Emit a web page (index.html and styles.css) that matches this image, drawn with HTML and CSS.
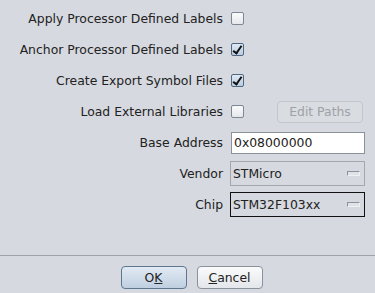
FILE: index.html
```html
<!DOCTYPE html>
<html lang="en">
<head>
<meta charset="UTF-8">
<meta name="viewport" content="width=device-width, initial-scale=1.0">
<title>Processor Options</title>
<link rel="stylesheet" href="styles.css">
</head>
<body>
<div class="dialog">
    <form class="options">
        <label class="field-label" for="applyLabels">Apply Processor Defined Labels</label>
        <div class="control"><input type="checkbox" id="applyLabels" class="check"></div>

        <label class="field-label" for="anchorLabels">Anchor Processor Defined Labels</label>
        <div class="control"><input type="checkbox" id="anchorLabels" class="check" checked></div>

        <label class="field-label" for="exportSymbols">Create Export Symbol Files</label>
        <div class="control"><input type="checkbox" id="exportSymbols" class="check" checked></div>

        <label class="field-label" for="externalLibs">Load External Libraries</label>
        <div class="control control-split">
            <input type="checkbox" id="externalLibs" class="check">
            <button type="button" class="btn btn-disabled" disabled>Edit Paths</button>
        </div>

        <label class="field-label" for="baseAddress">Base Address</label>
        <div class="control"><input type="text" id="baseAddress" class="text-field" value="0x08000000"></div>

        <label class="field-label" for="vendor">Vendor</label>
        <div class="control">
            <div class="combo" id="vendor">
                <span>STMicro</span>
                <span class="combo-arrow"></span>
            </div>
        </div>

        <label class="field-label" for="chip">Chip</label>
        <div class="control">
            <div class="combo combo-focus" id="chip">
                <span>STM32F103xx</span>
                <span class="combo-arrow"></span>
            </div>
        </div>
    </form>

    <div class="footer">
        <button type="button" class="btn btn-default">O<u>K</u></button>
        <button type="button" class="btn"><u>C</u>ancel</button>
    </div>
</div>
</body>
</html>
```

FILE: styles.css
```css
body {
    margin: 0;
    padding: 0;
    background-color: #d6d9df;
    font-family: 'DejaVu Sans', sans-serif;
    font-size: 12.4px;
    color: #222;
}
.dialog {
    height: 293px;
    display: flex;
    flex-direction: column;
}
.options {
    flex: 1;
    display: grid;
    grid-template-columns: 1fr 135px;
    grid-auto-rows: 31px;
    column-gap: 7px;
    align-items: center;
    padding: 3px 10px 0 10px;
}
.field-label {
    text-align: right;
}
.control {
    display: flex;
    align-items: center;
}
.control-split {
    justify-content: space-between;
}
.check {
    appearance: none;
    -webkit-appearance: none;
    width: 13px;
    height: 13px;
    margin: 0 0 0 1px;
    border: 1px solid #7d8894;
    border-radius: 2px;
    background: linear-gradient(#fbfbfc, #e4e7eb);
    box-sizing: border-box;
    position: relative;
}
.check:checked {
    border-color: #50677f;
    background: linear-gradient(#dfe9f4, #b9cde1);
}
.check:checked::after {
    content: "";
    position: absolute;
    left: 3px;
    top: 0px;
    width: 3px;
    height: 8px;
    border: solid #111;
    border-width: 0 2px 2px 0;
    transform: rotate(35deg);
}
.btn {
    font-family: 'DejaVu Sans', sans-serif;
    font-size: 12.4px;
    color: #222;
    height: 22px;
    padding: 0 8px;
    border: 1px solid #8a929b;
    border-radius: 4px;
    background: linear-gradient(#fbfbfc, #e3e6ea);
}
.btn-disabled {
    width: 86px;
    margin-right: 2px;
    color: #9ea2a7;
    border-color: #c3c7cc;
    background: #d9dce1;
}
.btn-default {
    border-color: #5e7791;
    background: linear-gradient(#e2eaf3, #bfcfe0);
}
.text-field {
    width: 134px;
    height: 22px;
    margin: 0 0 0 1px;
    padding: 0 2px;
    box-sizing: border-box;
    border: 1px solid #8c9299;
    background: #fff;
    font-family: 'DejaVu Sans', sans-serif;
    font-size: 12.4px;
    color: #222;
}
.combo {
    width: 135px;
    height: 25px;
    box-sizing: border-box;
    display: flex;
    align-items: center;
    justify-content: space-between;
    padding: 0 4px 0 2px;
    border: 1px solid #a2a8ae;
    background: #d6d9df;
}
.combo-focus {
    border-color: #111;
}
.combo-arrow {
    width: 13px;
    height: 5px;
    box-sizing: border-box;
    border: 1px solid #8d939a;
    border-right-color: #eef0f2;
    border-bottom-color: #eef0f2;
    background: #dfe2e6;
}
.footer {
    height: 38px;
    border-top: 1px solid #9ea3a9;
    display: flex;
    justify-content: center;
    align-items: flex-start;
    gap: 10px;
    padding: 10px 0 0 8px;
    box-sizing: border-box;
}
.footer .btn {
    width: 66px;
    height: 23px;
}
```
